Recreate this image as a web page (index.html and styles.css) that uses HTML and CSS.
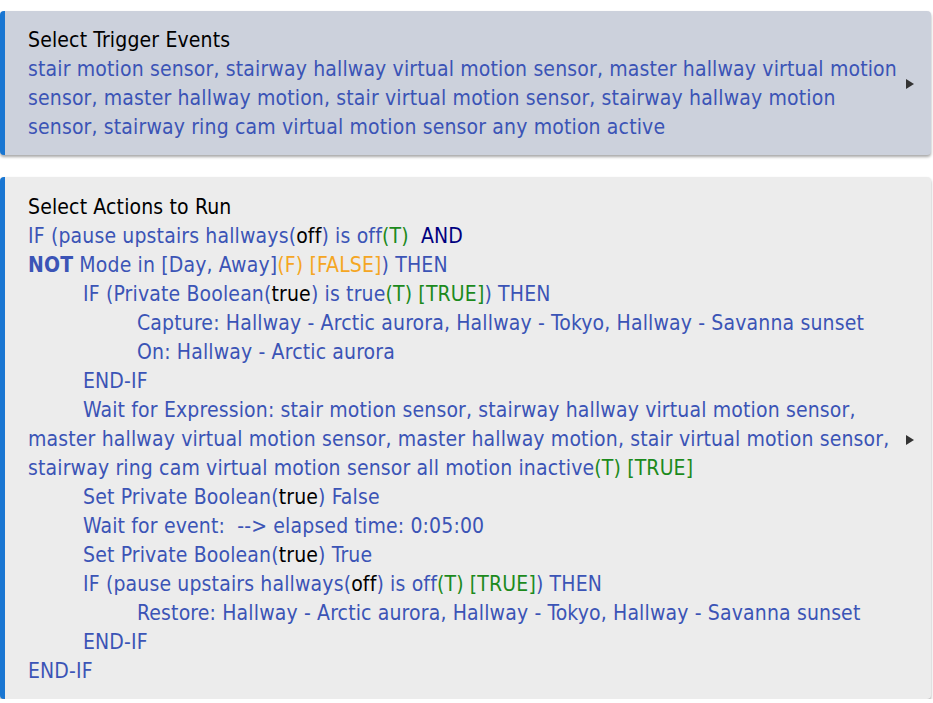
FILE: index.html
```html
<!DOCTYPE html>
<html lang="en">

<head>
    <meta charset="utf-8">
    <meta name="viewport" content="width=device-width, initial-scale=1.0">
    <title>Rule - Triggers and Actions</title>
    <link rel="stylesheet" href="styles.css">
</head>

<body>
    <section class="card trigger">
        <div class="body">
            <div class="title">Select Trigger Events</div>
            <div class="line">stair motion sensor, stairway hallway virtual motion sensor, master hallway virtual motion sensor, master hallway motion, stair virtual motion sensor, stairway hallway motion sensor, stairway ring cam virtual motion sensor any motion active</div>
        </div>
        <div class="arrow">
            <svg width="10" height="12" viewBox="0 0 10 12"><path d="M1 1 L9 6 L1 11 Z" fill="#333"/></svg>
        </div>
    </section>

    <section class="card actions">
        <div class="body">
            <div class="title">Select Actions to Run</div>
            <div class="line">IF (pause upstairs hallways(<span class="val">off</span>) is off<span class="ok">(T)</span>&nbsp; <span class="and">AND</span></div>
            <div class="line"><b>NOT</b> Mode in [Day, Away]<span class="no">(F) [FALSE]</span>) THEN</div>
            <div class="line i1">IF (Private Boolean(<span class="val">true</span>) is true<span class="ok">(T) [TRUE]</span>) THEN</div>
            <div class="line i2">Capture: Hallway - Arctic aurora, Hallway - Tokyo, Hallway - Savanna sunset</div>
            <div class="line i2">On: Hallway - Arctic aurora</div>
            <div class="line i1">END-IF</div>
            <div class="line i1">Wait for Expression: stair motion sensor, stairway hallway virtual motion sensor, master hallway virtual motion sensor, master hallway motion, stair virtual motion sensor, stairway ring cam virtual motion sensor all motion inactive<span class="ok">(T) [TRUE]</span></div>
            <div class="line i1">Set Private Boolean(<span class="val">true</span>) False</div>
            <div class="line i1">Wait for event: &nbsp;--&gt; elapsed time: 0:05:00</div>
            <div class="line i1">Set Private Boolean(<span class="val">true</span>) True</div>
            <div class="line i1">IF (pause upstairs hallways(<span class="val">off</span>) is off<span class="ok">(T) [TRUE]</span>) THEN</div>
            <div class="line i2">Restore: Hallway - Arctic aurora, Hallway - Tokyo, Hallway - Savanna sunset</div>
            <div class="line i1">END-IF</div>
            <div class="line">END-IF</div>
        </div>
        <div class="arrow">
            <svg width="10" height="12" viewBox="0 0 10 12"><path d="M1 1 L9 6 L1 11 Z" fill="#333"/></svg>
        </div>
    </section>
</body>

</html>
```

FILE: styles.css
```css
body {
    margin: 0;
    padding: 11px 2px 0 0;
    background-color: white;
    font-family: "DejaVu Sans Condensed", "DejaVu Sans", sans-serif;
    font-stretch: condensed;
    font-size: 21px;
    letter-spacing: 0.15px;
    line-height: 29px;
}

.card {
    display: flex;
    align-items: center;
    border-left: 5px solid #1976d2;
    border-radius: 4px;
    padding: 15px 0 13px 23px;
    box-shadow: 0 2px 3px rgba(0, 0, 0, 0.35);
}

.trigger {
    background-color: #ccd1dc;
    margin-bottom: 22px;
}

.actions {
    background-color: #ececec;
    padding-top: 16px;
}

.body {
    flex: 1;
    color: #3b54b6;
}

.title {
    color: black;
}

.arrow {
    width: 29px;
    padding-left: 3px;
    box-sizing: border-box;
    display: flex;
}

.i1 {
    text-indent: 55px;
}

.i2 {
    text-indent: 109px;
}

.val {
    color: black;
}

.ok {
    color: #1c8a1c;
}

.no {
    color: #f5a623;
}

.and {
    color: #000080;
}

b {
    font-weight: bold;
}
```
